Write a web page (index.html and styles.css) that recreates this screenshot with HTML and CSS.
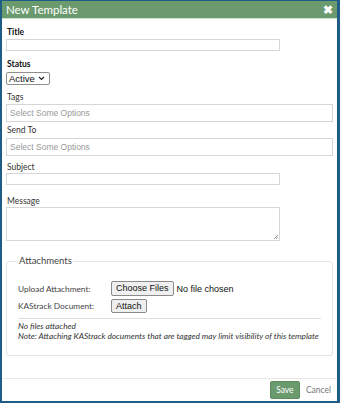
FILE: index.html
```html
<!DOCTYPE html>
<html>
<head>
<meta charset="utf-8">
<link rel="stylesheet" href="styles.css">
</head>
<body>
<div class="modal">
  <div class="header">
    <span class="title">New Template</span>
    <span class="close">✖</span>
  </div>
  <div class="content">
    <div class="label bold lbl-title">Title</div>
    <div class="input short"></div>
    <div class="label bold lbl-status">Status</div>
    <div class="select">Active <svg width="7" height="5" viewBox="0 0 7 5"><path d="M1 1 L3.5 3.5 L6 1" fill="none" stroke="#222" stroke-width="1.2"/></svg></div>
    <div class="label lbl-tags">Tags</div>
    <div class="input wide">Select Some Options</div>
    <div class="label lbl-send">Send To</div>
    <div class="input wide">Select Some Options</div>
    <div class="label lbl-subject">Subject</div>
    <div class="input short"></div>
    <div class="label lbl-message">Message</div>
    <div class="textarea"><svg class="grip" width="5" height="5" viewBox="0 0 5 5"><path d="M1 5 L5 1 M3 5 L5 3" stroke="#888" stroke-width="0.8"/></svg></div>
    <fieldset class="attach">
      <legend>Attachments</legend>
      <div class="rows">
        <span class="rlabel">Upload Attachment:</span>
        <span class="rctl"><span class="btn">Choose Files</span><span class="nofile">No file chosen</span></span>
        <span class="rlabel">KAStrack Document:</span>
        <span class="rctl"><span class="btn">Attach</span></span>
      </div>
      <div class="hr"></div>
      <div class="note">No files attached</div>
      <div class="note">Note: Attaching KAStrack documents that are tagged may limit visibility of this template</div>
    </fieldset>
  </div>
  <div class="footer">
    <span class="save">Save</span>
    <span class="cancel">Cancel</span>
  </div>
</div>
</body>
</html>
```

FILE: styles.css
```css
html, body { margin: 0; padding: 0; background: #fff; }
.modal {
  width: 340px; height: 403px; box-sizing: border-box;
  border: 3px solid #1f5c86; border-left-width: 2px; border-top-width: 1px; border-bottom-width: 2px;
  display: flex; flex-direction: column;
  font-family: Lato, "Liberation Sans", sans-serif; color: #333;
}
.header {
  height: 17px; background: #6b9a6e; border-bottom: 1px solid #cfe0cf;
  display: flex; justify-content: space-between; align-items: center;
  padding: 0 4px 0 4px; color: #fff;
}
.title { font-size: 11.5px; line-height: 17px; }
.close { font-size: 12px; font-weight: bold; line-height: 12px; margin-right: 0; }
.content { flex: 1; padding: 0 4px; display: flex; flex-direction: column; align-items: flex-start; }
.label { font-size: 8.5px; line-height: 11px; padding-left: 1px; color: #333; }
.bold { font-weight: bold; color: #111; }
.lbl-title { margin-top: 8px; }
.lbl-status { margin-top: 8px; }
.lbl-tags { margin-top: 7px; }
.lbl-send { margin-top: 3px; }
.lbl-subject { margin-top: 6px; }
.lbl-message { margin-top: 11px; }
.input {
  box-sizing: border-box; border: 1px solid #d6d6d6; background: #fff;
  font-family: "Liberation Sans", Arial, sans-serif; font-size: 8.5px; color: #9a9a9a;
}
.short { width: 274px; height: 12px; margin-top: 1px; }
.wide { width: 327px; height: 18px; margin-top: 1px; padding-left: 3px; line-height: 16px; }
.lbl-send + .wide { margin-top: 2px; }
.lbl-subject + .short { margin-top: 0; }
.select {
  margin-top: 2px; box-sizing: border-box; width: 44px; height: 13px;
  border: 1px solid #8f8f8f; border-radius: 2px; background: #fff;
  font-family: "Liberation Sans", Arial, sans-serif; font-size: 9.5px; color: #111;
  display: flex; align-items: center; justify-content: space-between; padding: 0 4px 0 2px;
}
.textarea {
  box-sizing: border-box; width: 274px; height: 34px; border: 1px solid #d6d6d6;
  position: relative;
}
.grip { position: absolute; right: 1px; bottom: 1px; }
.attach {
  margin: 14px 0 0 0; width: 327px; box-sizing: border-box;
  border: 1px solid #e4e4e4; border-radius: 3px; padding: 0 11px 14px 11px;
}
.attach legend {
  font-size: 9.5px; line-height: 12px; color: #444; padding: 0 1px; margin-left: 0;
}
.rows {
  margin-top: 14px; display: grid; grid-template-columns: 93px 1fr; row-gap: 3px;
  align-items: center;
}
.rlabel { font-size: 8.3px; color: #444; }
.rctl { display: flex; align-items: center; }
.btn {
  box-sizing: border-box; height: 15px; padding: 0 4px; line-height: 13px;
  border: 1px solid #8a8a8a; border-radius: 2px; background: #efefef;
  font-family: "Liberation Sans", Arial, sans-serif; font-size: 9px; color: #111;
}
.rows .rctl:last-child .btn { height: 14px; line-height: 12px; }
.nofile { margin-left: 3px; font-family: "Liberation Sans", Arial, sans-serif; font-size: 9px; color: #111; }
.hr { height: 1px; background: #ddd; margin-top: 5px; }
.note { font-size: 8.3px; line-height: 10px; font-style: italic; color: #333; }
.hr + .note { margin-top: 2px; }
.footer {
  height: 22px; border-top: 1px solid #e8e8e8; display: flex; justify-content: flex-end;
  align-items: center; padding-right: 6px; gap: 6px;
}
.save {
  box-sizing: border-box; height: 18px; width: 30px; background: #6b9a6e; color: #fff;
  border: 1px solid #5a8a5e; border-radius: 2px; font-size: 8.5px; line-height: 16px; text-align: center;
}
.cancel { font-size: 8.5px; color: #777; }
```
